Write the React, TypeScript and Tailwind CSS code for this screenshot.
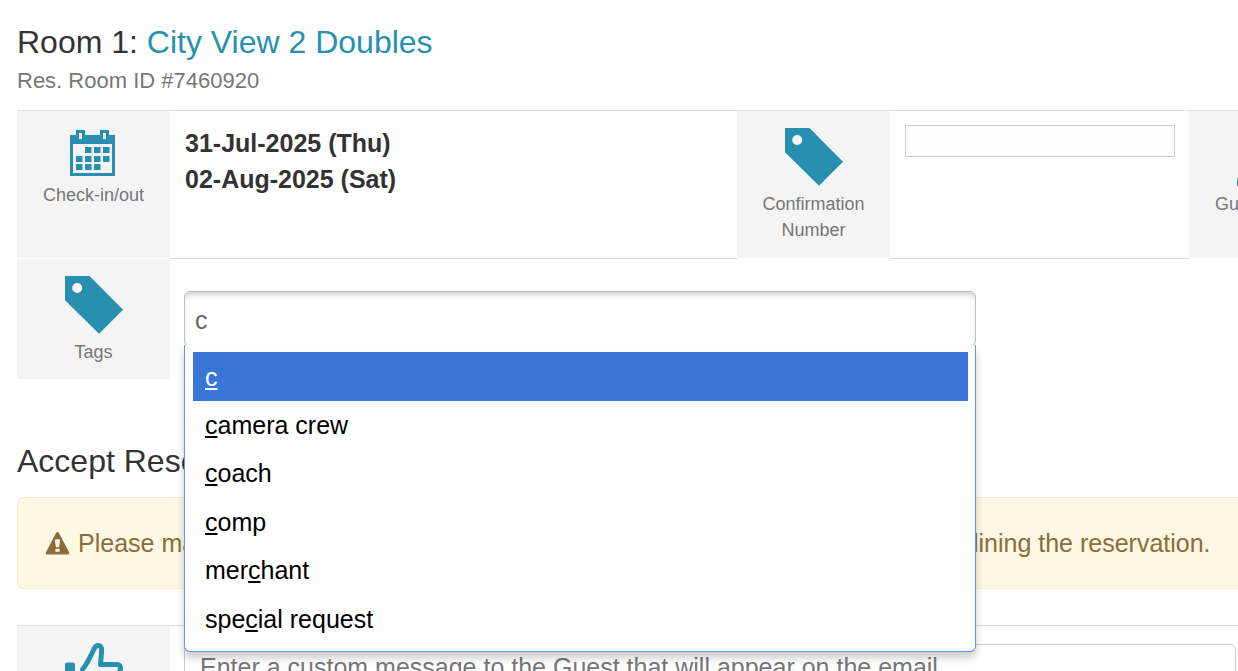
import { useState } from "react";
import type { ReactNode } from "react";

const tags = ["camera crew", "coach", "comp", "merchant", "special request"];

function TagIcon() {
  return (
    <svg width="58" height="58" viewBox="0 0 58 58" aria-hidden="true">
      <path
        fill="#2790b0"
        fillRule="evenodd"
        d="M0 0H24.5L58 33.7L34 57.7L0 24.2ZM12.2 7A5 5 0 1 0 12.2 17A5 5 0 1 0 12.2 7Z"
      />
    </svg>
  );
}

function CalendarIcon() {
  const days = [
    [15, 17], [24, 17], [33, 17],
    [6, 26], [15, 26], [24, 26], [33, 26],
    [6, 34], [15, 34], [24, 34],
  ];
  return (
    <svg width="48" height="49" viewBox="0 -2 48 49" aria-hidden="true">
      <path
        fill="#2790b0"
        fillRule="evenodd"
        d="M0 5H6V0H15V5H30V0H39V5H45V46H0ZM3 14V43H42V14ZM9 3V9H12V3ZM33 3V9H36V3Z"
      />
      {days.map(([x, y]) => (
        <rect key={`${x}-${y}`} x={x} y={y} width="6.5" height="6" fill="#2790b0" />
      ))}
    </svg>
  );
}

function GuestIcon() {
  return (
    <svg width="58" height="58" viewBox="0 0 58 58" fill="#2790b0" aria-hidden="true">
      <circle cx="29" cy="15" r="14" />
      <path d="M0 58V53Q2 38 18 34H40Q56 38 58 53V58Z" />
    </svg>
  );
}

function ThumbIcon() {
  return (
    <svg width="58" height="58" viewBox="0 0 58 58" aria-hidden="true">
      <rect x="0" y="19.5" width="10" height="34" rx="2" fill="#2790b0" />
      <path
        d="M17.5 50V26.500C21.500 21.500 26 12.500 28.500 7C30 3.500 31 2.500 33 2.500C36 2.500 37 5 36.500 9L35.500 21.500H52Q55.500 21.500 55.500 26L49 50Q48 53 44 53H24Z"
        fill="none"
        stroke="#2790b0"
        strokeWidth="5"
        strokeLinejoin="round"
      />
    </svg>
  );
}

function WarningIcon() {
  return (
    <svg width="25" height="23" viewBox="0 0 25 24" className="shrink-0" aria-hidden="true">
      <path
        fill="#8a6d3b"
        fillRule="evenodd"
        d="M12.500 0Q13.500 0 14 1L24.700 21.500Q25.500 23.500 23.500 23.500H1.500Q-.5 23.500 .3 21.500L11 1Q11.500 0 12.500 0ZM10 7.500V11L11 16H14L15 11V7.500ZM10.300 17.500V20.500H14.700V17.500Z"
      />
    </svg>
  );
}

function LabelCell({ icon, children }: { icon: ReactNode; children: ReactNode }) {
  return (
    <div className="flex w-[153px] shrink-0 flex-col items-center border-b border-white bg-[#f4f4f4] px-5 pt-[17px] pb-[14px] text-center text-[18px] leading-[26px] text-[#777]">
      {icon}
      <div className="mt-[5px]">{children}</div>
    </div>
  );
}

// underline the part of the tag that matches what was typed
function Match({ text, query }: { text: string; query: string }) {
  const at = text.indexOf(query);
  if (!query || at < 0) {
    return <>{text}</>;
  }
  return (
    <>
      {text.slice(0, at)}
      <span className="underline">{query}</span>
      {text.slice(at + query.length)}
    </>
  );
}

function TagSelect() {
  const [query, setQuery] = useState("c");
  const [active, setActive] = useState(0);
  const options = [query, ...tags.filter((tag) => tag.includes(query))];

  return (
    <div className="relative mt-8 ml-[14px] h-14 w-[792px]">
      <input
        id="tags"
        value={query}
        onChange={(e) => setQuery(e.target.value)}
        autoComplete="off"
        className="h-14 w-full rounded-md border border-[#bbb] bg-white px-[10px] pt-[2px] text-[25px] text-[#666] shadow-[inset_0_5px_6px_-3px_#ccc] outline-none"
      />
      {/* suggestions */}
      <div className="absolute inset-x-0 top-[54px] z-10 rounded-b-md border border-t-0 border-[#5897fb] bg-white pt-[7px] pr-[7px] pb-2 pl-2 shadow-[0_6px_8px_rgba(0,0,0,0.2)]">
        <ul role="listbox" aria-label="Tags" className="grid h-[291px] auto-rows-fr">
          {options.map((option, i) => (
            <li
              key={i}
              role="option"
              aria-selected={i === active}
              onMouseEnter={() => setActive(i)}
              className={
                i === active
                  ? "flex items-center bg-[#3875d7] px-3 pt-[2px] text-[25px] whitespace-pre text-white"
                  : "flex items-center px-3 pt-px text-[25px] whitespace-pre text-black"
              }
            >
              <span>
                <Match text={option} query={query} />
              </span>
            </li>
          ))}
        </ul>
      </div>
    </div>
  );
}

export default function App() {
  return (
    <main className="h-screen overflow-hidden bg-white px-[17px] pt-[22px] font-['Liberation_Sans',Arial,sans-serif] text-[#333]">
      <h1 className="text-[32px] leading-10">
        Room 1:{" "}
        <a href="#room" className="text-[#2790b0]">
          City View 2 Doubles
        </a>
      </h1>
      <p className="text-[22px] leading-[38px] text-[#777]">Res. Room ID #7460920</p>

      {/* room details */}
      <section className="mt-[10px] -mr-[121px]">
        <div className="flex border-t border-[#ddd]">
          <LabelCell icon={<CalendarIcon />}>Check-in/out</LabelCell>
          <div className="min-h-[148px] flex-1 border-b border-[#ddd] px-[15px] pt-[14px] text-[25px] leading-9 font-bold">
            <p>31-Jul-2025 (Thu)</p>
            <p>02-Aug-2025 (Sat)</p>
          </div>
          <LabelCell icon={<TagIcon />}>
            <label htmlFor="confirmation">Confirmation Number</label>
          </LabelCell>
          <div className="w-[299px] shrink-0 border-b border-[#ddd] px-[15px] pt-[14px]">
            <input
              id="confirmation"
              className="block h-8 w-[270px] border border-[#ccc] bg-[#fdfdfd] px-2 text-[18px]"
            />
          </div>
          <LabelCell icon={<GuestIcon />}>Guest Name</LabelCell>
        </div>
        <div className="flex">
          <LabelCell icon={<TagIcon />}>
            <label htmlFor="tags">Tags</label>
          </LabelCell>
          <TagSelect />
        </div>
      </section>

      <h2 className="mt-[61px] text-[32px] leading-10">Accept Reservation</h2>
      <div
        role="alert"
        className="mt-4 -mr-10 flex h-[92px] items-center gap-2 rounded-md border border-[#faebcc] bg-[#fdf7e3] px-[27px] text-[25px] whitespace-nowrap text-[#8a6d3b]"
      >
        <WarningIcon />
        <p className="pt-[2px]">
          Please make sure to review all of the room details above before accepting or declining the reservation.
        </p>
      </div>

      {/* reply to the guest */}
      <section className="mt-9 -mr-[17px] flex border-t border-[#ddd]">
        <LabelCell icon={<ThumbIcon />}>
          <label htmlFor="message">Accept</label>
        </LabelCell>
        <div className="flex-1 pt-[18px] pr-[2px] pl-[14px]">
          <textarea
            id="message"
            rows={4}
            placeholder="Enter a custom message to the Guest that will appear on the email"
            className="block w-full resize-none rounded-md border border-[#ccc] px-[15px] py-1 text-[25px] leading-9 placeholder:text-[#777]"
          />
        </div>
      </section>
    </main>
  );
}
